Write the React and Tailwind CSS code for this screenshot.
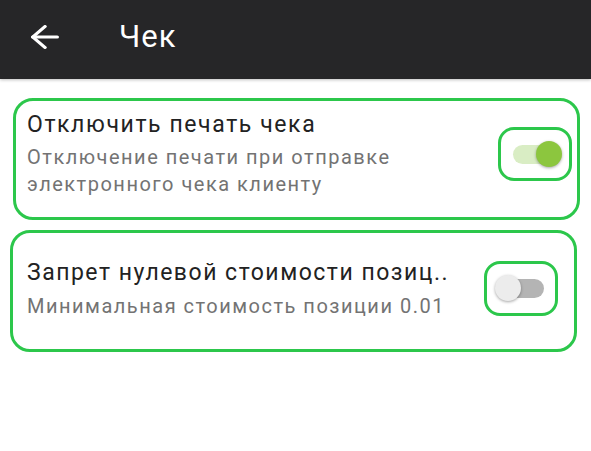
const Toggle = ({ on }) => (
  <div className="relative w-[53px] h-[26px] flex items-center">
    <div
      className={`mx-auto w-[45px] h-[19px] rounded-full ${
        on ? "bg-[#d9edc4]" : "bg-[#b4b4b4]"
      }`}
    />
    <div
      className={`absolute top-0 w-[26px] h-[26px] rounded-full shadow-[0_1px_3px_rgba(0,0,0,0.35)] ${
        on ? "right-0 bg-[#8cc63e]" : "left-0 bg-[#ececec]"
      }`}
    />
  </div>
);

const App = () => {
  return (
    <div
      className="w-[591px] h-[451px] bg-white overflow-hidden"
      style={{ fontFamily: "Roboto, 'Liberation Sans', sans-serif" }}
    >
      {/* Header */}
      <div className="h-[79px] bg-[#262628] flex items-center pb-[6px] shadow-[0_1px_3px_rgba(0,0,0,0.25)]">
        <svg
          className="ml-[31px]"
          width="28"
          height="24"
          viewBox="4 4 16 16"
          preserveAspectRatio="none"
          fill="none"
          stroke="white"
          strokeWidth="2"
          strokeLinecap="round"
          strokeLinejoin="round"
        >
          <path d="m12 19-7-7 7-7" />
          <path d="M19 12H5" />
        </svg>
        <h1 className="ml-[60px] text-[31px] tracking-[1px] text-white leading-none">
          Чек
        </h1>
      </div>

      {/* Card 1 */}
      <div className="mt-[19px] ml-[13px] mr-[11px] h-[122px] border-[3px] border-[#2cc74b] rounded-[20px] flex items-start pl-[11px] pr-[5px] pt-[11px]">
        <div className="flex-1">
          <p className="text-[23px] leading-[26px] tracking-[1.6px] text-[#222222]">
            Отключить печать чека
          </p>
          <p className="mt-[6px] text-[20px] leading-[27px] tracking-[1.5px] text-[#737373]">
            Отключение печати при отправке
            <br />
            электронного чека клиенту
          </p>
        </div>
        <div className="mt-[15px] w-[74px] h-[54px] border-[3px] border-[#2cc74b] rounded-[16px] flex items-center justify-center">
          <Toggle on />
        </div>
      </div>

      {/* Card 2 */}
      <div className="mt-[10px] ml-[10px] mr-[14px] h-[122px] border-[3px] border-[#2cc74b] rounded-[20px] flex items-center pl-[14px] pr-[16px]">
        <div className="flex-1 pb-[3px] whitespace-nowrap">
          <p className="text-[23px] leading-[26px] tracking-[1.5px] text-[#222222]">
            Запрет нулевой стоимости позиц..
          </p>
          <p className="mt-[7px] text-[20px] leading-[27px] tracking-[1.5px] text-[#737373]">
            Минимальная стоимость позиции 0.01
          </p>
        </div>
        <div className="mb-[6px] w-[74px] h-[55px] border-[3px] border-[#2cc74b] rounded-[16px] flex items-center justify-center">
          <Toggle on={false} />
        </div>
      </div>
    </div>
  );
};

export default App;
